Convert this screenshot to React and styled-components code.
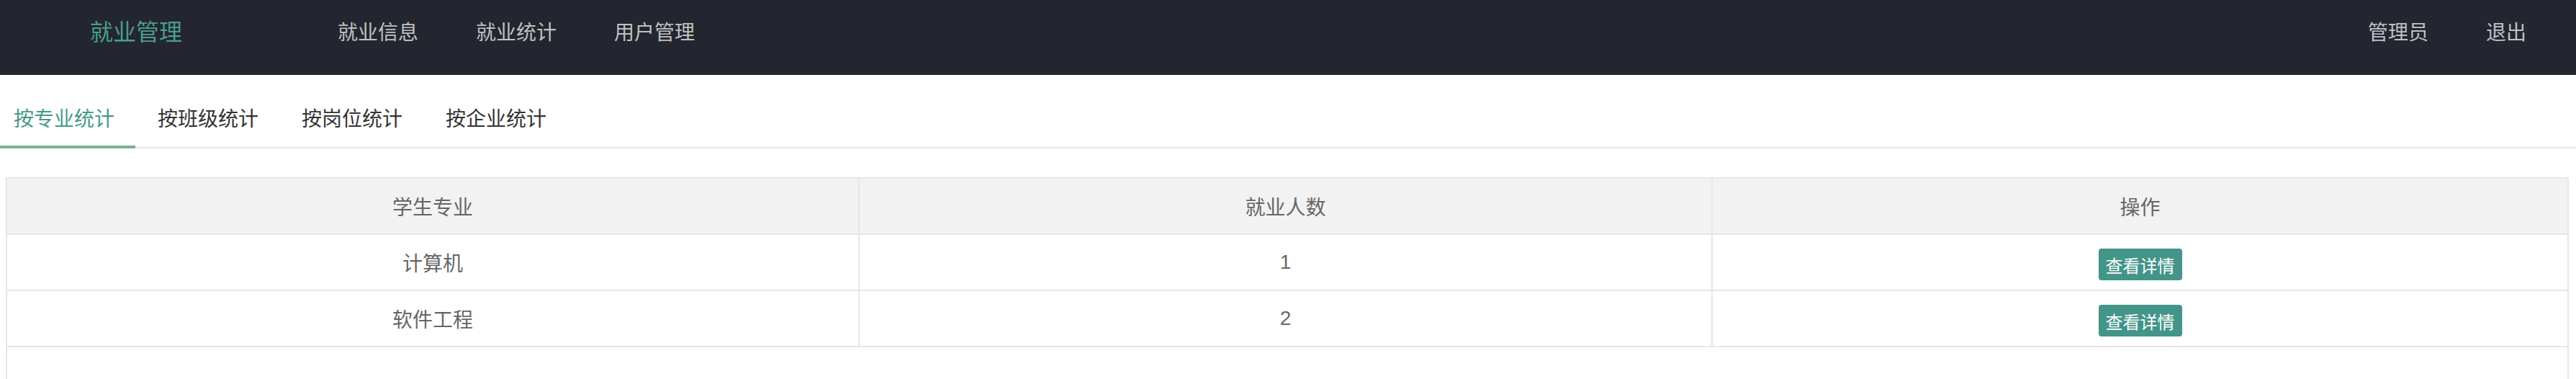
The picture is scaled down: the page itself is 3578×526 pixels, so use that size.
import React from "react";
import styled, { createGlobalStyle } from "styled-components";

const GlobalStyle = createGlobalStyle`
  html, body {
    margin: 0;
    padding: 0;
    background: #fff;
    font-family: "Liberation Sans", "Noto Sans CJK SC", sans-serif;
  }
  * {
    box-sizing: border-box;
  }
`;

const navLeft = ["就业信息", "就业统计", "用户管理"];
const navRight = ["管理员", "退出"];
const tabs = ["按专业统计", "按班级统计", "按岗位统计", "按企业统计"];
const rows = [
  { major: "计算机", count: 1 },
  { major: "软件工程", count: 2 },
];

const App = () => {
  return (
    <>
      <GlobalStyle />
      <Header>
        <Logo>就业管理</Logo>
        <Nav>
          {navLeft.map((item) => (
            <NavItem key={item}>{item}</NavItem>
          ))}
        </Nav>
        <Nav $right>
          {navRight.map((item) => (
            <NavItem key={item}>{item}</NavItem>
          ))}
        </Nav>
      </Header>

      <TabBar>
        {tabs.map((tab, i) => (
          <TabItem key={tab} $active={i === 0}>
            {tab}
          </TabItem>
        ))}
      </TabBar>

      <Content>
        <Table>
          <Row $head>
            <Cell>学生专业</Cell>
            <Cell>就业人数</Cell>
            <Cell>操作</Cell>
          </Row>
          {rows.map((row) => (
            <Row key={row.major}>
              <Cell>{row.major}</Cell>
              <Cell>{row.count}</Cell>
              <Cell>
                <DetailButton>查看详情</DetailButton>
              </Cell>
            </Row>
          ))}
        </Table>
      </Content>
    </>
  );
};

export default App;

const Header = styled.header`
  display: flex;
  align-items: flex-start;
  height: 104px;
  background-color: #23262e;
`;

const Logo = styled.div`
  width: 429px;
  padding-left: 125px;
  line-height: 91px;
  font-size: 32px;
  color: #4a9d8b;
  white-space: nowrap;
`;

const Nav = styled.nav`
  display: flex;
  margin-left: ${(p) => (p.$right ? "auto" : "0")};
  padding-right: ${(p) => (p.$right ? "29px" : "0")};
`;

const NavItem = styled.div`
  padding: 0 40px;
  line-height: 91px;
  font-size: 28px;
  color: rgba(255, 255, 255, 0.72);
  white-space: nowrap;
`;

const TabBar = styled.div`
  display: flex;
  margin-top: 20px;
  height: 82px;
  border-bottom: 2px solid #e6e6e6;
`;

const TabItem = styled.div`
  position: relative;
  width: 200px;
  height: 80px;
  padding-left: 19px;
  line-height: 83px;
  font-size: 28px;
  color: ${(p) => (p.$active ? "#449a88" : "#333")};
  white-space: nowrap;

  &::after {
    content: "";
    display: ${(p) => (p.$active ? "block" : "none")};
    position: absolute;
    left: 0;
    bottom: -2px;
    width: 188px;
    height: 4px;
    background-color: #78b48f;
  }
`;

const Content = styled.main`
  padding: 40px 10px 0 8px;
`;

const Table = styled.div`
  min-height: 340px;
  border: 2px solid #e6e6e6;
  border-bottom: none;
`;

const Row = styled.div`
  display: grid;
  grid-template-columns: 1182fr 1185fr 1189fr;
  height: 78px;
  border-bottom: 2px solid #e6e6e6;
  background-color: ${(p) => (p.$head ? "#f2f2f2" : "#fff")};
`;

const Cell = styled.div`
  display: flex;
  align-items: center;
  justify-content: center;
  font-size: 28px;
  color: #666;

  & + & {
    border-left: 2px solid #e6e6e6;
  }
`;

const DetailButton = styled.button`
  display: inline-flex;
  align-items: center;
  justify-content: center;
  height: 44px;
  margin-top: 6px;
  padding: 0 10px;
  border: none;
  border-radius: 4px;
  background-color: #439589;
  color: #fff;
  font-family: inherit;
  font-size: 24px;
  white-space: nowrap;
`;
